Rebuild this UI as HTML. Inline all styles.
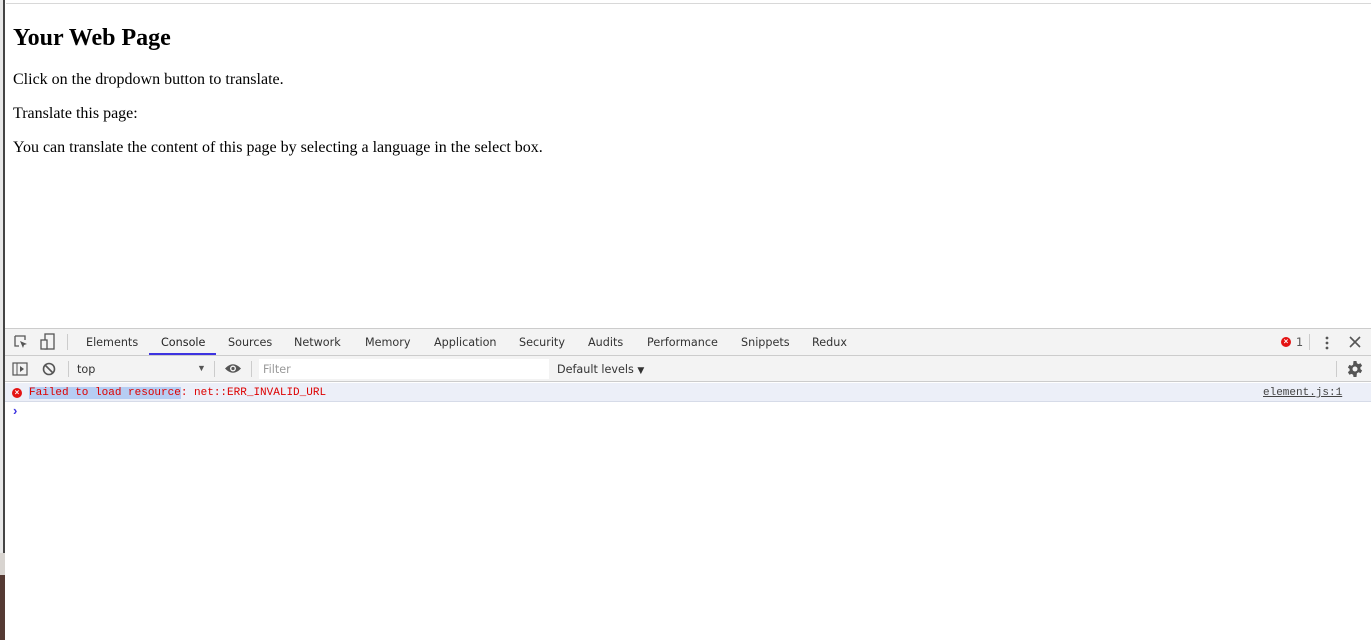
<!DOCTYPE html>
<html><head><style>
*{margin:0;padding:0;box-sizing:border-box}
body{width:1371px;height:640px;overflow:hidden;background:#fff;position:relative;font-family:"Liberation Sans",sans-serif}
.ab{position:absolute}
.tab{position:absolute;top:336px;color:#333;font-family:"DejaVu Sans","Liberation Sans",sans-serif;font-size:11.2px}
.mono{font-family:"Liberation Mono","DejaVu Sans Mono",monospace;font-size:11px}
</style></head><body>
<div class="ab" style="left:0;top:0;width:3px;height:553px;background:#e8e8e8"></div>
<div class="ab" style="left:3px;top:0;width:2px;height:553px;background:#444"></div>
<div class="ab" style="left:0;top:553px;width:5px;height:22px;background:#d8d4d0"></div>
<div class="ab" style="left:0;top:575px;width:5px;height:65px;background:#553a33"></div>
<div class="ab" style="left:6px;top:3px;width:1365px;height:1px;background:#d8d8d8"></div>
<div class="ab" style="left:13px;top:25px;font-family:'Liberation Serif',serif;font-weight:bold;font-size:24px">Your Web Page</div>
<div class="ab" style="left:13px;top:71px;font-family:'Liberation Serif',serif;font-size:16px">Click on the dropdown button to translate.</div>
<div class="ab" style="left:13px;top:105px;font-family:'Liberation Serif',serif;font-size:16px">Translate this page:</div>
<div class="ab" style="left:13px;top:139px;font-family:'Liberation Serif',serif;font-size:16px">You can translate the content of this page by selecting a language in the select box.</div>

<div class="ab" style="left:5px;top:328px;width:1366px;height:28px;background:#f3f3f3;border-top:1px solid #ccc;border-bottom:1px solid #ccc"></div>
<svg class="ab" style="left:13px;top:334px" width="16" height="16"><path d="M2 2h10v4M2 2v10h4" stroke="#555" fill="none" stroke-width="1.3"/><path d="M7 7l7 3-3 1-1 3z" fill="#555"/></svg>
<svg class="ab" style="left:40px;top:333px" width="16" height="18"><rect x="5" y="1" width="9" height="15" fill="none" stroke="#555" stroke-width="1.3"/><rect x="1" y="7" width="6" height="9" fill="#f3f3f3" stroke="#555" stroke-width="1.3"/></svg>
<div class="ab" style="left:67px;top:334px;width:1px;height:16px;background:#ccc"></div>
<div class="tab" style="left:86px">Elements</div>
<div class="tab" style="left:161px;color:#222">Console</div>
<div class="ab" style="left:149px;top:353px;width:67px;height:2px;background:#3d33e0"></div>
<div class="tab" style="left:228px">Sources</div>
<div class="tab" style="left:294px">Network</div>
<div class="tab" style="left:365px">Memory</div>
<div class="tab" style="left:434px">Application</div>
<div class="tab" style="left:519px">Security</div>
<div class="tab" style="left:588px">Audits</div>
<div class="tab" style="left:647px">Performance</div>
<div class="tab" style="left:741px">Snippets</div>
<div class="tab" style="left:812px">Redux</div>
<div class="ab" style="left:1281px;top:337px;width:10px;height:10px;border-radius:50%;background:#e41313;color:#fff;font-size:8px;line-height:10px;text-align:center;font-weight:bold">×</div>
<div class="tab" style="left:1296px;color:#555">1</div>
<div class="ab" style="left:1309px;top:334px;width:1px;height:16px;background:#ccc"></div>
<svg class="ab" style="left:1323px;top:335px" width="8" height="16"><circle cx="4" cy="3" r="1.4" fill="#555"/><circle cx="4" cy="8" r="1.4" fill="#555"/><circle cx="4" cy="13" r="1.4" fill="#555"/></svg>
<svg class="ab" style="left:1349px;top:336px" width="12" height="12"><path d="M1 1l10 10M11 1L1 11" stroke="#555" stroke-width="1.6"/></svg>

<div class="ab" style="left:5px;top:356px;width:1366px;height:26px;background:#f3f3f3;border-bottom:1px solid #ccc"></div>
<svg class="ab" style="left:12px;top:362px" width="16" height="14"><rect x="1" y="1" width="14" height="12" fill="none" stroke="#555" stroke-width="1.2"/><path d="M5 1v12" stroke="#555"/><path d="M8 4l4 3-4 3z" fill="#555"/></svg>
<svg class="ab" style="left:42px;top:362px" width="14" height="14"><circle cx="7" cy="7" r="5.5" fill="none" stroke="#555" stroke-width="1.6"/><path d="M3 3l8 8" stroke="#555" stroke-width="1.6"/></svg>
<div class="ab" style="left:68px;top:361px;width:1px;height:16px;background:#ccc"></div>
<div class="tab" style="left:77px;top:363px">top</div>
<div class="ab" style="left:197px;top:363px;font-size:9px;color:#555">▼</div>
<div class="ab" style="left:214px;top:361px;width:1px;height:16px;background:#ccc"></div>
<svg class="ab" style="left:224px;top:362px" width="18" height="13"><path d="M1 6.5Q9 -2 17 6.5Q9 15 1 6.5z" fill="#555"/><circle cx="9" cy="6.5" r="3" fill="#f3f3f3"/><circle cx="9" cy="6.5" r="1.6" fill="#555"/></svg>
<div class="ab" style="left:251px;top:361px;width:1px;height:16px;background:#ccc"></div>
<div class="ab" style="left:259px;top:359px;width:290px;height:20px;background:#fff"></div>
<div class="tab" style="left:263px;top:363px;color:#999">Filter</div>
<div class="tab" style="left:557px;top:363px">Default levels <span style="font-size:9px">▼</span></div>
<div class="ab" style="left:1336px;top:361px;width:1px;height:16px;background:#ccc"></div>
<svg class="ab" style="left:1347px;top:361px" width="16" height="16" viewBox="0 0 16 16"><path d="M6.5 0h3l.4 2.2 1.6.9 2.1-.8 1.5 2.6-1.7 1.4v1.8l1.7 1.4-1.5 2.6-2.1-.8-1.6.9L9.5 16h-3l-.4-2.2-1.6-.9-2.1.8L.9 11.1l1.7-1.4V7.9L.9 6.5 2.4 3.9l2.1.8 1.6-.9z" fill="#555"/><circle cx="8" cy="8" r="2.5" fill="#f3f3f3"/></svg>

<div class="ab" style="left:5px;top:383px;width:1366px;height:19px;background:#eceff8;border-bottom:1px solid #d6dbe8"></div>
<div class="ab" style="left:12px;top:388px;width:10px;height:10px;border-radius:50%;background:#e41313;color:#fff;font-size:8px;line-height:10px;text-align:center;font-weight:bold">×</div>
<div class="ab mono" style="left:29px;top:387px;color:#d00;line-height:13px"><span style="background:#b6cdf3">Failed to load resource</span>: net::ERR_INVALID_URL</div>
<div class="ab mono" style="left:1263px;top:387px;color:#444;text-decoration:underline;line-height:13px">element.js:1</div>
<div class="ab" style="left:13px;top:403px;color:#3d33e0;font-size:13px;font-weight:bold">›</div>
</body></html>
